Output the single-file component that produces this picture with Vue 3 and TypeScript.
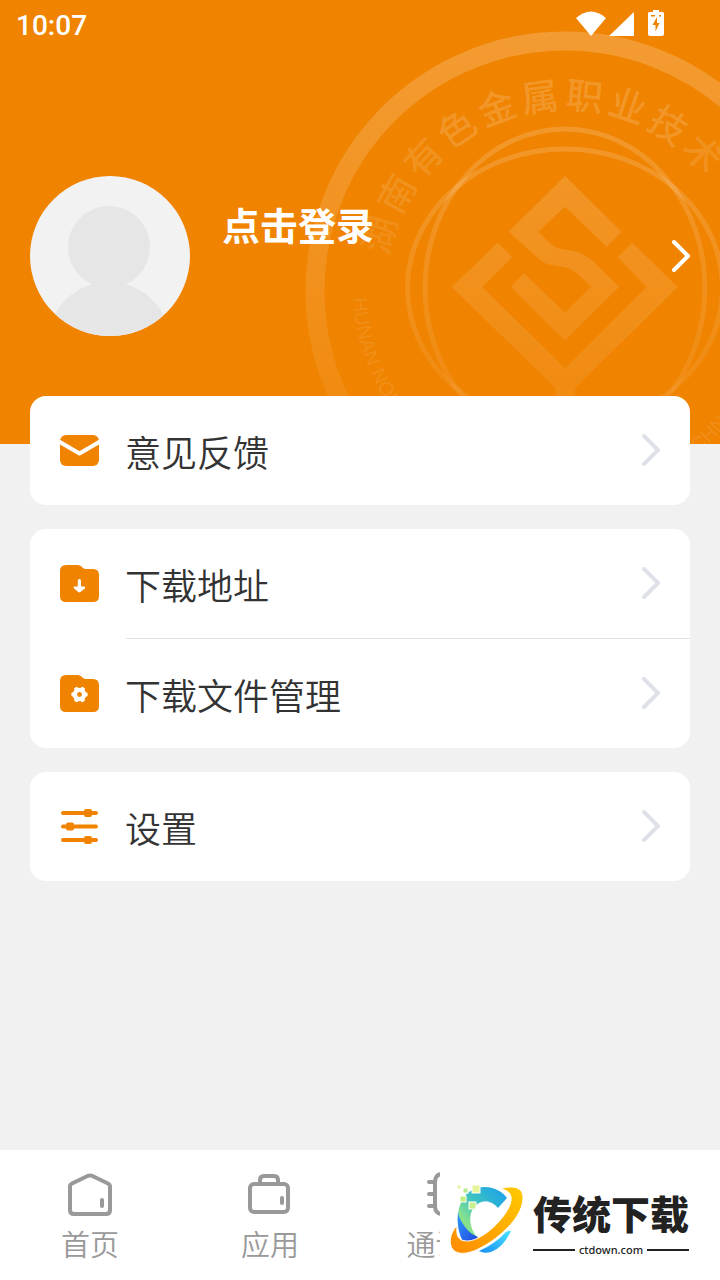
<script setup lang="ts">
interface MenuEntry {
  label: string
  icon: 'mail' | 'download' | 'files' | 'settings'
}

const groups: MenuEntry[][] = [
  [{ label: '意见反馈', icon: 'mail' }],
  [
    { label: '下载地址', icon: 'download' },
    { label: '下载文件管理', icon: 'files' },
  ],
  [{ label: '设置', icon: 'settings' }],
]

const tabs = [
  { label: '首页', icon: 'home' },
  { label: '应用', icon: 'apps' },
  { label: '通讯录', icon: 'contacts' },
]

// Characters sit on the ring and fade with their height, like the rest of the seal.
const sealChars = [...'湖南有色金属职业技术'].map((char, i) => {
  const angle = -74 + i * 13.3
  const drop = 1 - Math.cos((angle * Math.PI) / 180)
  return { char, angle, opacity: 0.17 - 0.09 * drop }
})

const teeth = [30, 90, 150, 210, 270, 330]
</script>

<template>
  <main class="page">
    <header class="hero">
      <svg class="seal" viewBox="0 0 420 444" width="420" height="444" aria-hidden="true">
        <defs>
          <linearGradient id="sealFade" gradientUnits="userSpaceOnUse" x1="0" y1="30" x2="0" y2="444">
            <stop offset="0" stop-color="#fff" stop-opacity=".2" />
            <stop offset="1" stop-color="#fff" stop-opacity=".05" />
          </linearGradient>
          <path id="sealArc" d="M53 288A212 212 0 0 0 477 288" />
        </defs>
        <g fill="none" stroke="url(#sealFade)">
          <circle cx="265" cy="291" r="250" stroke-width="19" />
          <ellipse cx="265" cy="288" rx="140" ry="159" stroke-width="5" />
          <ellipse cx="265" cy="288" rx="157.500" ry="139" stroke-width="5" />
        </g>
        <g fill="url(#sealFade)">
          <path d="M265 176L321.700 231.700 306.700 246.700 265 206.700 238.300 231.700 250 243.500C257 250 264 249 273 250.700 284 253 291 259 297 265L319 287 265 340.700 210.700 287 224 273.300 265 312.700 291 287 280 276C273 269.500 267 267 258 266 250 265 245 264 240 260L208.700 231.700Z" />
          <path d="M151.700 287L197.700 242.700 212.300 257.300 182.300 287 265 368.300 346.700 287 317.700 257.300 332.300 242.700 377.700 287 275 388.300V420H255.700V388.300Z" />
        </g>
        <g class="seal-cn">
          <text
            v-for="item in sealChars"
            :key="item.char"
            x="265"
            y="109"
            text-anchor="middle"
            :fill-opacity="item.opacity"
            :transform="`rotate(${item.angle} 265 288)`"
          >{{ item.char }}</text>
        </g>
        <text class="seal-en">
          <textPath href="#sealArc" startOffset="10">HUNAN NONFERROUS METALS VOCATIONAL TECHNICAL</textPath>
        </text>
      </svg>

      <div class="status">
        <time>10:07</time>
        <svg width="90" height="28" viewBox="0 0 90 28" fill="#fff" aria-hidden="true">
          <path d="M0 8Q15-5 30 8L15 26Z" />
          <path d="M58 2V26H33Z" />
          <path d="M77 0h6v2h3.500q1.500 0 1.500 1.500V24q0 2-2 2H74q-2 0-2-2V3.500Q72 2 73.500 2H77Z" />
          <path fill="#f08300" d="M81 7L76.500 15H79.500V21.500L83.500 13H81ZM75 5h4v1.500h-4ZM83 5h2v1.500h-2Z" />
        </svg>
      </div>

      <button class="profile" type="button">
        <svg class="avatar" width="160" height="160" viewBox="0 0 160 160" aria-hidden="true">
          <defs><clipPath id="avatarClip"><circle cx="80" cy="80" r="80" /></clipPath></defs>
          <g clip-path="url(#avatarClip)">
            <path fill="#f2f2f2" d="M0 0H160V160H0Z" />
            <circle cx="79" cy="71" r="41" fill="#e6e6e6" />
            <ellipse cx="79" cy="166" rx="61" ry="60" fill="#e6e6e6" />
          </g>
        </svg>
        <span class="profile-name">点击登录</span>
        <svg width="20" height="34" viewBox="0 0 20 34" fill="none" stroke="#fff" stroke-width="4" stroke-linecap="round" stroke-linejoin="round" aria-hidden="true">
          <path d="M4 3L18 17 4 31" />
        </svg>
      </button>
    </header>

    <div class="groups">
      <ul v-for="(group, g) in groups" :key="g" class="card">
        <li v-for="entry in group" :key="entry.label">
          <button class="row" type="button">
            <svg class="row-icon" width="39" height="40" viewBox="0 0 39 40" fill="#f08300" aria-hidden="true">
              <template v-if="entry.icon === 'mail'">
                <rect y="4" width="39" height="31" rx="6" />
                <path d="M-1 10.500L19.500 22.500 40 10.500" fill="none" stroke="#fff" stroke-width="4" stroke-linejoin="round" />
              </template>
              <template v-else-if="entry.icon === 'settings'">
                <path d="M3 6H36M3 19.500H36M3 33H36" fill="none" stroke="#f08300" stroke-width="4" stroke-linecap="round" />
                <rect x="24" y="2" width="8" height="8" rx="2" />
                <rect x="6" y="15.500" width="8" height="8" rx="2" />
                <rect x="24" y="29" width="8" height="8" rx="2" />
              </template>
              <template v-else>
                <path d="M6 1H18Q20 1 21.500 2.500L23 4Q24.200 5 26 5H33Q39 5 39 11V32Q39 38 33 38H6Q0 38 0 32V7Q0 1 6 1Z" />
                <path v-if="entry.icon === 'download'" d="M17.800 16.500Q17.800 15 19.400 15T21 16.500V22.500H24.500Q26 23 24.800 24.400L20.500 28Q19.400 28.800 18.300 28L14 24.400Q12.800 23 14.300 22.500H17.800Z" fill="#fff" />
                <g v-else fill="#fff">
                  <circle cx="19.500" cy="20.500" r="6.800" />
                  <rect v-for="angle in teeth" :key="angle" x="17.500" y="12.400" width="4" height="5" rx="1" :transform="`rotate(${angle} 19.500 20.500)`" />
                  <circle cx="19.500" cy="20.500" r="2.400" fill="#f08300" />
                </g>
              </template>
            </svg>
            <span class="row-label">{{ entry.label }}</span>
            <svg width="20" height="34" viewBox="0 0 20 34" fill="none" stroke="#dee2e8" stroke-width="4" stroke-linecap="round" stroke-linejoin="round" aria-hidden="true">
              <path d="M3 2L17 16 3 30" />
            </svg>
          </button>
        </li>
      </ul>
    </div>

    <footer class="bottom">
      <nav class="tabs">
        <button v-for="tab in tabs" :key="tab.label" class="tab" type="button">
          <svg width="46" height="46" viewBox="0 0 46 46" fill="none" stroke="#999" stroke-width="4" stroke-linejoin="round" stroke-linecap="round" aria-hidden="true">
            <template v-if="tab.icon === 'home'">
              <path d="M3 14.500Q3 12.500 5 11.500L20.500 4Q23 2.800 25.500 4L41 11.500Q43 12.500 43 14.500V38Q43 42 39 42H7Q3 42 3 38Z" />
              <path d="M35 28V34" />
            </template>
            <template v-else-if="tab.icon === 'apps'">
              <rect x="3" y="12" width="38" height="28" rx="4" />
              <path d="M13 11V8Q13 4 17 4H27Q31 4 31 8V11M35 26V31" />
            </template>
            <template v-else>
              <path d="M14 2H38Q42 2 42 6V38Q42 42 38 42H14Q8 41 8 34V10Q8 3 14 2ZM2 10H7M2 22H7M2 34H7M17 33Q24 25 31 33" />
              <circle cx="24" cy="17" r="6" />
            </template>
          </svg>
          <span>{{ tab.label }}</span>
        </button>
      </nav>

      <a class="brand" href="#">
        <svg width="76" height="72" viewBox="0 0 76 72" aria-hidden="true">
          <defs>
            <linearGradient id="brandArc" x1="1" y1="0" x2="0" y2="1">
              <stop offset="0" stop-color="#159df0" />
              <stop offset=".45" stop-color="#3cc1c2" />
              <stop offset=".75" stop-color="#8ae38a" />
              <stop offset="1" stop-color="#5ec6a0" />
            </linearGradient>
            <linearGradient id="brandDeep" x1="0" y1="0" x2="1" y2="1">
              <stop offset="0" stop-color="#2f9bff" />
              <stop offset="1" stop-color="#2046dc" />
            </linearGradient>
            <linearGradient id="brandOrbit" x1="1" y1="0" x2="0" y2="1">
              <stop offset="0" stop-color="#ffca00" />
              <stop offset="1" stop-color="#ff8a00" />
            </linearGradient>
            <linearGradient id="brandTail" x1="0" y1="1" x2="1" y2="0">
              <stop offset="0" stop-color="#168df8" />
              <stop offset="1" stop-color="#49e4ff" />
            </linearGradient>
          </defs>
          <path fill="url(#brandArc)" d="M58 14L49 24Q40 14 30 19C17 27 20 45 29 54Q22 58 16 56C5 42 7 18 20 8C33-1 50 3 58 14Z" />
          <path fill="url(#brandDeep)" d="M9 28Q7 44 14 58H24Q27 56 29 53Q21 50 16 43Q10 35 9 28Z" />
          <path fill="url(#brandTail)" d="M62 47Q54 64 42 68Q35 70 30 67Q46 60 57 48Q61 46 62 47Z" />
          <path fill="url(#brandOrbit)" stroke="#fff" d="M51 5C62 1 75 2 74 15C73 31 58 46 43 57C31 65 19 71 10 69C0 67 0 56 3 49Q5 44 8 42Q6 57 17 57C31 58 53 38 60 23C65 12 61 6 51 5Z" />
          <g fill="#e5f59b" stroke="#fff" stroke-width="1">
            <rect x="8" y="1" width="4" height="4" />
            <rect x="23" y="1" width="8" height="8" />
            <rect x="14" y="4" width="5" height="5" fill="#b4eb8c" />
            <rect x="11" y="12" width="6" height="6" fill="#c0f080" />
            <rect x="20" y="18" width="7" height="7" fill="#c8ef8e" />
          </g>
        </svg>
        <span class="brand-words">
          <strong>传统下载</strong>
          <span class="brand-site">ctdown.com</span>
        </span>
      </a>
    </footer>
  </main>
</template>

<style>
body {
  margin: 0;
}
</style>

<style scoped>
.page {
  display: flex;
  flex-direction: column;
  min-height: 100vh;
  background: #f1f1f1;
  color: #333;
  font-family: "Noto Sans CJK SC", sans-serif;
}

button {
  margin: 0;
  padding: 0;
  border: 0;
  background: none;
  color: inherit;
  font: inherit;
  text-align: left;
  cursor: pointer;
}

svg {
  display: block;
  flex: none;
}

.hero {
  position: relative;
  overflow: hidden;
  box-sizing: border-box;
  height: 444px;
  background: #f08300;
  color: #fff;
}

.seal {
  position: absolute;
  top: 0;
  right: 0;
}

.seal-cn {
  fill: #fff;
  font: 500 37px "Noto Sans CJK SC", sans-serif;
}

.seal-en {
  fill: rgba(255, 255, 255, .11);
  font: 20px "Liberation Sans", sans-serif;
}

.status {
  position: relative;
  display: flex;
  justify-content: space-between;
  padding: 10px 54px 0 16px;
  font-family: Roboto, sans-serif;
  font-size: 28px;
  font-weight: 500;
  line-height: 32px;
}

.profile {
  position: relative;
  display: flex;
  align-items: center;
  width: 100%;
  margin-top: 134px;
  padding: 0 30px;
}

.profile-name {
  flex: 1;
  align-self: flex-start;
  margin: 20px 0 0 32px;
  font-size: 38px;
  font-weight: 700;
  line-height: 56px;
}

.groups {
  position: relative;
  display: flex;
  flex: 1;
  flex-direction: column;
  gap: 24px;
  margin-top: -48px;
  padding: 0 30px 24px;
}

.card {
  margin: 0;
  padding: 0;
  border-radius: 16px;
  background: #fff;
  list-style: none;
}

.card li + li::before {
  content: "";
  display: block;
  height: 1px;
  margin-left: 96px;
  background: #dee2e8;
}

.row {
  display: flex;
  align-items: center;
  width: 100%;
  height: 109px;
  padding: 0 29px 0 30px;
}

.row-label {
  flex: 1;
  margin-left: 26px;
  font-size: 36px;
  font-weight: 350;
  line-height: 54px;
}

.bottom {
  position: relative;
  background: #fff;
}

.tabs {
  display: grid;
  grid-template-columns: repeat(4, 1fr);
}

.tab {
  display: flex;
  flex-direction: column;
  align-items: center;
  gap: 4px;
  height: 130px;
  padding-top: 22px;
  box-sizing: border-box;
  color: #999;
  font-size: 29px;
  font-weight: 350;
  line-height: 42px;
}

.brand {
  position: absolute;
  top: 0;
  right: 0;
  bottom: 0;
  display: flex;
  gap: 8px;
  box-sizing: border-box;
  width: 280px;
  padding: 34px 31px 0 9px;
  background: #fff;
  color: #222;
  text-decoration: none;
}

.brand-words {
  display: flex;
  flex: 1;
  flex-direction: column;
}

.brand-words strong {
  font-size: 39px;
  font-weight: 900;
  line-height: 56px;
  white-space: nowrap;
}

.brand-site {
  display: flex;
  align-items: center;
  gap: 4px;
  font-family: "Noto Sans", sans-serif;
  font-size: 11px;
  font-weight: 500;
  line-height: 20px;
}

.brand-site::before,
.brand-site::after {
  content: "";
  flex: 1;
  height: 2px;
  background: #222;
}
</style>
